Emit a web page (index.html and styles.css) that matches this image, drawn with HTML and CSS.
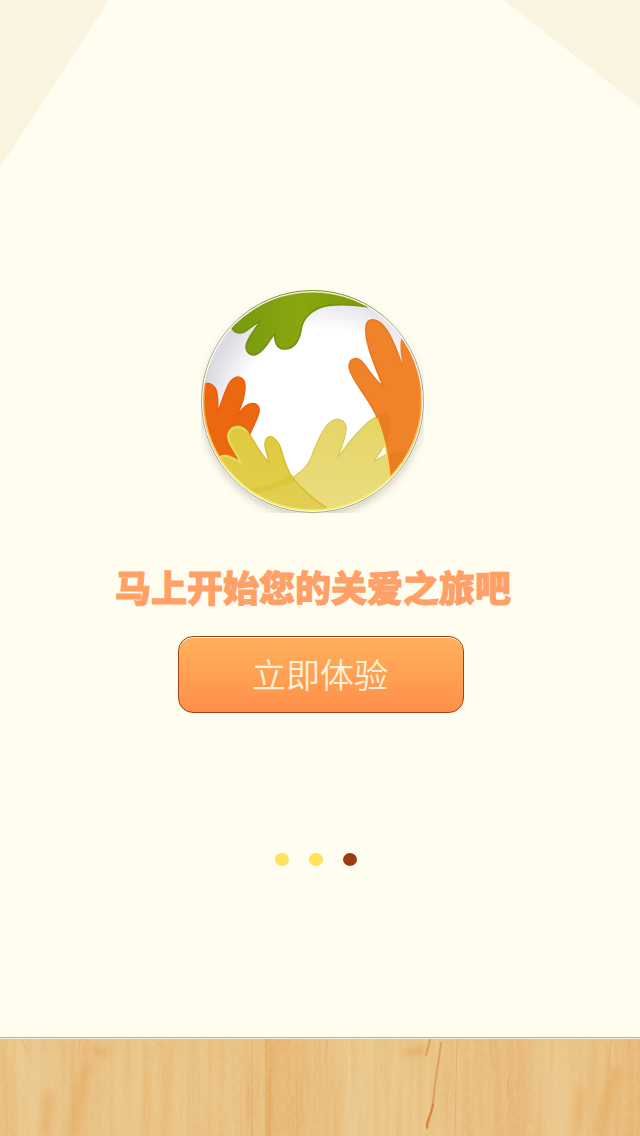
FILE: index.html
```
<!DOCTYPE html>
<html lang="zh-CN">
<head>
<meta charset="utf-8">
<meta name="viewport" content="width=device-width, initial-scale=1">
<title>关爱之旅</title>
<link rel="stylesheet" href="styles.css">
</head>
<body>
<div class="page">
  <main class="welcome">
    <div class="intro">
      <svg class="logo" viewBox="190 280 246 246" aria-hidden="true">
        <defs>
          <clipPath id="ball"><circle cx="312.5" cy="401.5" r="109.5"/></clipPath>
          <clipPath id="tile"><rect x="201" y="290" width="223" height="223"/></clipPath>
          <radialGradient id="white" cx=".56" cy=".56" r=".56"><stop offset=".7" stop-color="#fff"/><stop offset="1" stop-color="#dcdae2"/></radialGradient>
          <linearGradient id="green" x1="0" x2="1"><stop offset="0" stop-color="#769a10"/><stop offset=".5" stop-color="#8aa60f"/><stop offset="1" stop-color="#789b08"/></linearGradient>
          <linearGradient id="pale" x1="0" y1="0" x2="0" y2="1"><stop offset="0" stop-color="#e5d565"/><stop offset="1" stop-color="#ebdd84"/></linearGradient>
          <linearGradient id="gold" x1="0" y1="0" x2="0" y2="1"><stop offset="0" stop-color="#dfc93c"/><stop offset="1" stop-color="#e2cf56"/></linearGradient>
          <linearGradient id="rim" x1="0" y1="0" x2="0" y2="1"><stop offset="0" stop-color="#6f8c18"/><stop offset=".16" stop-color="#aaa99c"/><stop offset="1" stop-color="#a8a184"/></linearGradient>
          <linearGradient id="glow" x1="0" y1="0" x2="0" y2="1"><stop offset=".3" stop-color="#ffb03a" stop-opacity="0"/><stop offset=".6" stop-color="#ffa63a"/><stop offset=".8" stop-color="#f4ec50"/></linearGradient>
          <filter id="soft" x="-20%" y="-20%" width="140%" height="140%"><feGaussianBlur stdDeviation="5"/></filter>
        </defs>
        <g clip-path="url(#tile)">
          <circle cx="312.5" cy="406" r="110" fill="#8c8468" opacity=".45" filter="url(#soft)"/>
          <circle cx="312.5" cy="401.5" r="112" fill="#fbfaf0"/>
        </g>
        <g clip-path="url(#ball)">
          <circle cx="312.5" cy="401.5" r="110" fill="url(#white)"/>
          <path fill="url(#green)" stroke="#6d910c" stroke-width="1.5" d="M232 328C234 333 239 334 244 332C250 329 254 324 260 321C256 329 247 338 246 346C246 353 251 357 257 354C266 350 269 339 275 334C274 342 277 348 283 349C294 350 299 340 301 331C302 320 308 313 319 308C333 303 352 305 369 307L350 285L285 285L245 305Z"/>
          <path fill="#eb6810" stroke="#f05a10" stroke-width="1.5" d="M200 388C204 382 211 382 215 388C219 394 217 403 218 411C222 403 223 396 227 388C230 380 236 375 241 378C247 381 245 391 243 400C241 407 238 412 236 417C240 412 244 405 250 404C256 402 260 406 259 412C258 418 253 426 250 434L240 468L222 470L198 440Z"/>
          <path fill="url(#pale)" stroke="#dccb50" stroke-width="1.3" d="M292 478C302 471 308 466 311 458C316 444 324 425 332 421C339 416 347 422 346 430C345 441 340 449 338 458C345 447 354 436 363 427C372 418 386 409 391 417C394 431 383 449 373 462C383 456 392 449 407 452L424 457L405 507L330 520Z"/>
          <path fill="url(#gold)" stroke="#d7bc2b" stroke-width="1.3" d="M217 461C220 455 226 454 231 457C235 459 238 462 241 463C237 453 228 443 228 435C229 426 239 424 245 429C252 434 258 453 269 462C267 453 262 443 267 438C272 434 278 440 281 449C284 460 287 471 293 478C302 490 317 502 334 513L310 520L255 508Z"/>
          <path fill="none" stroke="#e7dc64" stroke-width="2" d="M219 458C223 453 232 457 241 463C235 449 224 440 230 431C234 425 243 427 247 432"/>
          <path fill="#d9be2d" opacity=".45" d="M248 489C266 487 280 482 290 475L295 481C278 489 260 494 247 494Z"/>
          <path fill="#f08229" d="M390 480C388 449 383 426 370 405C363 391 350 375 349 367C349 357 358 356 363 363C370 371 375 381 383 386C375 366 364 342 366 326C368 316 379 319 386 329C395 342 398 355 402 365C401 354 399 344 402 337L430 360L430 450Z"/>
          <path fill="none" stroke="#ea761e" stroke-width="1.5" d="M378 419C372 402 350 379 349 367C349 357 358 356 363 363C370 371 375 381 383 386C375 366 364 342 366 326C368 316 379 319 386 329C395 342 398 355 402 365"/>
          <path fill="#e87518" opacity=".5" d="M376 417C384 411 391 412 391 419C392 430 388 440 385 444ZM387 456C393 452 401 450 409 453L391 474L390 478Z"/>
          <path fill="none" stroke="#f3d853" stroke-width="1.5" d="M377 418C384 438 388 453 390 479"/>
          <circle cx="312.5" cy="401.5" r="108.7" fill="none" stroke="url(#glow)" stroke-width="1.8"/>
        </g>
        <circle cx="312.5" cy="401.5" r="109.8" fill="none" stroke="#fffef4" stroke-width="1.4" opacity=".6"/>
        <circle cx="312.5" cy="401.5" r="111" fill="none" stroke="url(#rim)"/>
      </svg>
      <h1 class="slogan">马上开始您的关爱之旅吧</h1>
    </div>
    <button class="start" type="button">立即体验</button>
    <nav class="dots" aria-label="引导页">
      <button class="dot" type="button" aria-label="第1页"></button>
      <button class="dot" type="button" aria-label="第2页"></button>
      <button class="dot dot-current" type="button" aria-label="第3页" aria-current="true"></button>
    </nav>
  </main>
  <footer class="floor">
    <svg class="wood" viewBox="0 0 640 98" preserveAspectRatio="none" aria-hidden="true">
      <defs>
        <filter id="grain" x="0" y="0" width="100%" height="100%" color-interpolation-filters="sRGB">
          <feTurbulence type="fractalNoise" baseFrequency=".12 .006" numOctaves="3" seed="8"/>
          <feColorMatrix values="0 0 0 0 .87  0 0 0 0 .6  0 0 0 0 .28  1.6 0 0 0 -.6"/>
        </filter>
        <filter id="fleck" x="0" y="0" width="100%" height="100%" color-interpolation-filters="sRGB">
          <feTurbulence type="fractalNoise" baseFrequency=".35 .15" numOctaves="2" seed="3"/>
          <feColorMatrix values="0 0 0 0 .93  0 0 0 0 .82  0 0 0 0 .62  0 1.6 0 0 -.6"/>
        </filter>
        <filter id="haze" x="-50%" y="-20%" width="200%" height="140%"><feGaussianBlur stdDeviation="4 3"/></filter>
        <linearGradient id="board">
          <stop offset="0" stop-color="#eac586"/><stop offset=".04" stop-color="#ebcb93"/><stop offset=".12" stop-color="#e9c084"/>
          <stop offset=".2" stop-color="#eac78b"/><stop offset=".4" stop-color="#eac489"/><stop offset=".413" stop-color="#e9c083"/>
          <stop offset=".416" stop-color="#e7b570"/><stop offset=".46" stop-color="#e8bd7c"/><stop offset=".54" stop-color="#ebca92"/>
          <stop offset=".65" stop-color="#eac78b"/><stop offset=".8" stop-color="#e8bd80"/><stop offset=".87" stop-color="#ebc98f"/><stop offset="1" stop-color="#e8bd7e"/>
        </linearGradient>
      </defs>
      <rect width="640" height="98" fill="url(#board)"/>
      <rect width="640" height="98" filter="url(#grain)" opacity=".36"/>
      <rect width="640" height="98" filter="url(#fleck)" opacity=".4"/>
      <g fill="none" stroke="#e29d4a" stroke-width="8" opacity=".45" filter="url(#haze)">
        <path d="M88 25C80 50 75 75 73 98M50 55L45 98M92 10L108 16M403 14L425 12M617 30C608 55 602 80 598 98M581 50L576 98"/>
      </g>
      <g fill="none" stroke="#dc9346" opacity=".35">
        <path d="M22 0L27 14M80 0L78 22M154 2L163 7M248 45V80M252 0V98M266 0V98M270 30V98M297 40V98M328 0L325 24M457 0L455 98M490 0L493 30M508 40V60M611 0L608 30"/>
      </g>
      <g fill="none" stroke="#dc9142" stroke-width="2" opacity=".7">
        <path d="M430 0L426 17M441 3C439 26 435 39 434 55C433 71 429 81 427 91"/>
      </g>
      <path d="M433 65C433 75 425 82 427 90" fill="none" stroke="#d17c34" stroke-width="2" opacity=".8"/>
    </svg>
  </footer>
</div>
</body>
</html>
```
FILE: styles.css
```
* {
  box-sizing: border-box;
}

body {
  margin: 0;
  background: #fffdf0;
  font-family: "Noto Sans CJK SC", sans-serif;
}

.page {
  position: relative;
  display: flex;
  flex-direction: column;
  min-height: 100vh;
  overflow: hidden;
}

/* Tinted corners behind the content */
.page::before,
.page::after {
  content: "";
  position: absolute;
  top: 0;
  background: #f9f3e0;
}

.page::before {
  left: 0;
  width: 109px;
  height: 168px;
  clip-path: polygon(0 0, 100% 0, 0 100%);
}

.page::after {
  right: 0;
  width: 136px;
  height: 107px;
  clip-path: polygon(0 0, 100% 0, 100% 100%);
}

.welcome {
  flex: 1;
  display: flex;
  flex-direction: column;
  align-items: center;
  padding: 280px 16px 40px;
}

.intro {
  display: flex;
  flex-direction: column;
  align-items: center;
  gap: 34px;
  padding-right: 14px;
}

.logo {
  width: 246px;
  height: 246px;
}

.slogan {
  margin: 0;
  color: #ffa066;
  font-size: 36px;
  font-weight: 900;
  line-height: 52px;
  -webkit-text-stroke: 1px #ffa066;
}

.start {
  width: 286px;
  max-width: 100%;
  height: 77px;
  margin: 24px 0 0 2px;
  padding: 0 2px 2px 0;
  border: 1px solid #a43f1c;
  border-radius: 15px;
  background: linear-gradient(#ffb15c, #ff8f49);
  box-shadow: inset 0 1px 0 #fff4dc;
  color: #fff1dc;
  font-family: inherit;
  font-size: 34px;
  font-weight: 350;
  line-height: 48px;
  cursor: pointer;
}

.dots {
  display: flex;
  gap: 20px;
  margin-top: 140px;
  padding-right: 8px;
}

.dot {
  width: 14px;
  height: 13px;
  padding: 0;
  border: 0;
  border-radius: 50%;
  background: #ffe15a;
  cursor: pointer;
}

.dot-current {
  background: #a03a10;
}

.floor {
  height: 99px;
  border-top: 1px solid #d9ab70;
  background: #eac489;
}

.wood {
  display: block;
  width: 100%;
  height: 98px;
  border-top: 1px solid #fbeedb;
}
```
